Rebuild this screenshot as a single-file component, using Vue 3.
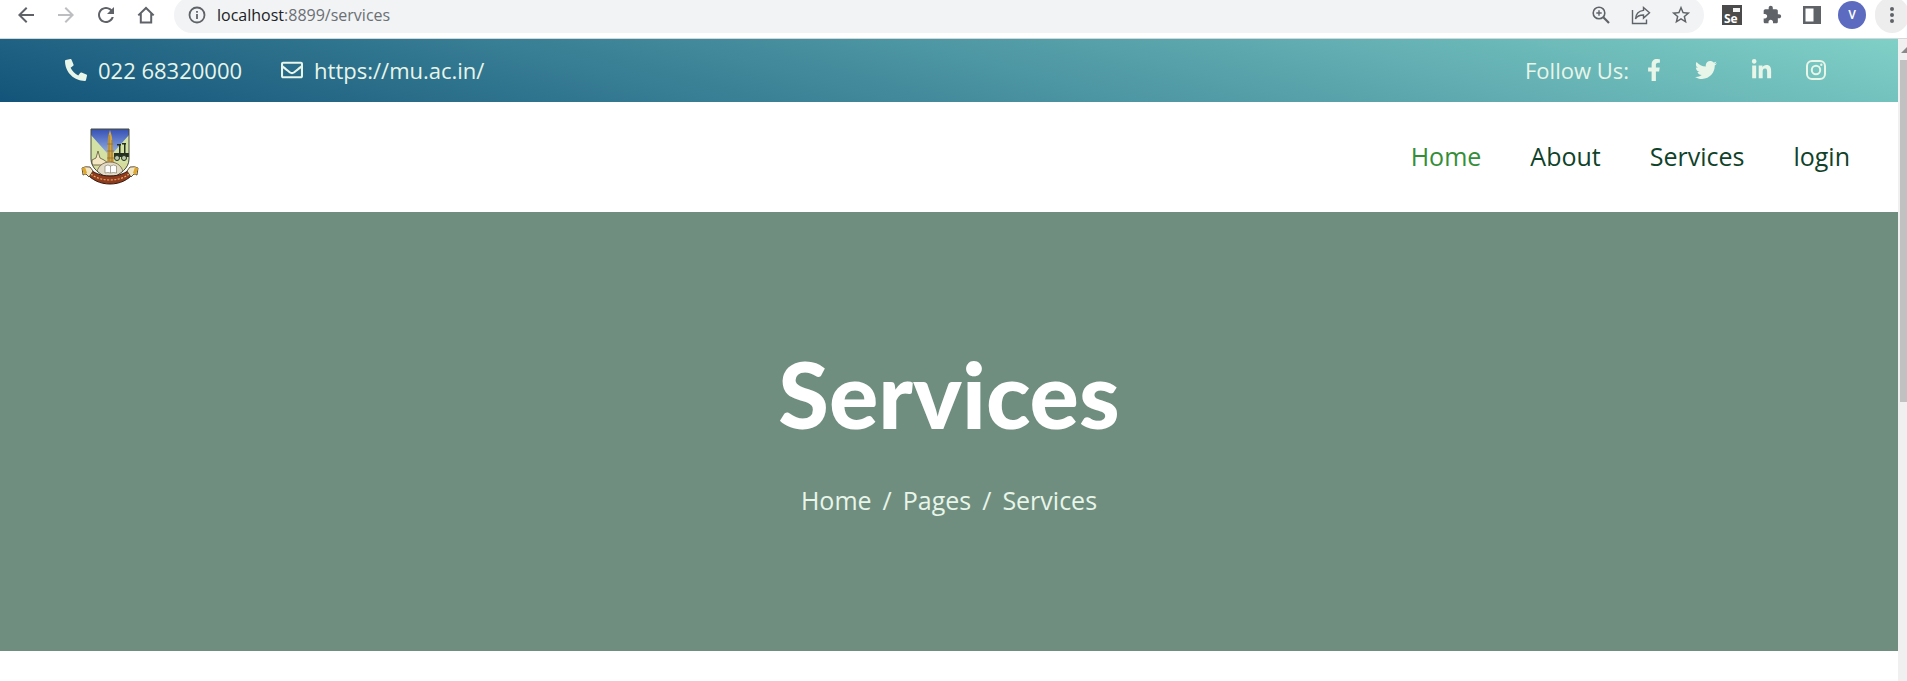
<script setup>
const navLinks = [
  { label: 'Home', active: true },
  { label: 'About', active: false },
  { label: 'Services', active: false },
  { label: 'login', active: false },
]
const crumbs = ['Home', 'Pages', 'Services']
const socials = [
  {
    name: 'Facebook',
    cls: 'facebook',
    box: '0 0 320 512',
    d: 'M279.14 288l14.22-92.66h-88.91v-60.13c0-25.35 12.42-50.06 52.24-50.06h40.42V6.26S260.43 0 225.36 0c-73.22 0-121.08 44.38-121.08 124.72v70.62H22.89V288h81.39v224h100.17V288z',
  },
  {
    name: 'Twitter',
    cls: 'twitter',
    box: '0 0 512 512',
    d: 'M459.37 151.716c.325 4.548.325 9.097.325 13.645 0 138.72-105.583 298.558-298.558 298.558-59.452 0-114.68-17.219-161.137-47.106 8.447.974 16.568 1.299 25.34 1.299 49.055 0 94.213-16.568 130.274-44.832-46.132-.975-84.792-31.188-98.112-72.772 6.498.974 12.995 1.624 19.818 1.624 9.421 0 18.843-1.3 27.614-3.573-48.081-9.747-84.143-51.98-84.143-102.985v-1.299c13.969 7.797 30.214 12.67 47.431 13.319-28.264-18.843-46.781-51.005-46.781-87.391 0-19.492 5.197-37.36 14.294-52.954 51.655 63.675 129.3 105.258 216.365 109.807-1.624-7.797-2.599-15.918-2.599-24.04 0-57.828 46.782-104.934 104.934-104.934 30.213 0 57.502 12.67 76.67 33.137 23.715-4.548 46.456-13.32 66.599-25.34-7.798 24.366-24.366 44.833-46.132 57.827 21.117-2.273 41.584-8.122 60.426-16.243-14.292 20.791-32.161 39.308-52.628 54.253z',
  },
  {
    name: 'LinkedIn',
    cls: 'linkedin',
    box: '0 0 448 512',
    d: 'M100.28 448H7.4V148.9h92.88zM53.79 108.1C24.09 108.1 0 83.5 0 53.8a53.79 53.79 0 0 1 107.58 0c0 29.7-24.1 54.3-53.79 54.3zM447.9 448h-92.68V302.4c0-34.7-.7-79.2-48.29-79.2-48.29 0-55.69 37.7-55.69 76.7V448h-92.78V148.9h89.08v40.8h1.3c12.4-23.5 42.69-48.3 87.88-48.3 94 0 111.28 61.9 111.28 142.3V448z',
  },
]
</script>

<template>
  <div class="window">
    <div class="toolbar">
      <button class="tool" aria-label="Back">
        <svg class="ic24" viewBox="0 0 24 24"><path d="M20 11H7.83l5.59-5.59L12 4l-8 8 8 8 1.41-1.41L7.83 13H20v-2z" /></svg>
      </button>
      <button class="tool dim" aria-label="Forward">
        <svg class="ic24" viewBox="0 0 24 24"><path d="M4 11h12.17l-5.59-5.59L12 4l8 8-8 8-1.41-1.41L16.17 13H4v-2z" /></svg>
      </button>
      <button class="tool" aria-label="Reload">
        <svg class="ic24" viewBox="0 0 24 24"><path d="M17.65 6.35C16.2 4.9 14.21 4 12 4c-4.42 0-7.99 3.58-7.99 8s3.57 8 7.99 8c3.73 0 6.84-2.55 7.73-6h-2.08c-.82 2.33-3.04 4-5.65 4-3.31 0-6-2.69-6-6s2.69-6 6-6c1.66 0 3.14.69 4.22 1.78L13 11h7V4l-2.35 2.35z" /></svg>
      </button>
      <button class="tool" aria-label="Home page">
        <svg class="ic24 line" viewBox="0 0 24 24"><path d="M4.3 12.4L12 5l7.700 7.400M6.800 10.500v9h10.400v-9" stroke-width="2" /></svg>
      </button>
      <div class="omnibox">
        <svg class="info line" viewBox="0 0 18 18"><circle cx="9" cy="9" r="7.500" stroke-width="1.800" /><path d="M9 8v5M9 5v1.800" stroke-width="1.800" /></svg>
        <span class="url"><b>localhost</b>:8899/services</span>
        <button class="tool" aria-label="Zoom">
          <svg class="ic20 line" viewBox="0 0 20 20"><circle cx="8" cy="8" r="5.800" stroke-width="1.600" /><path d="M12.300 12.300l5.700 5.700" stroke-width="2.200" /><path d="M8 5.300v5.400M5.300 8h5.400" stroke-width="1.400" /></svg>
        </button>
        <button class="tool" aria-label="Share">
          <svg class="ic20 line" viewBox="0 0 20 20"><path d="M1.500 5v13.500h14V14.500" stroke-width="1.400" /><path d="M12.500 2.500l6 5.300-6 5.300V10c-4 0-6.500 1-8 4 .3-5 3-8 8-8.600z" stroke-width="1.400" /></svg>
        </button>
        <button class="tool" aria-label="Bookmark">
          <svg class="ic22" viewBox="0 0 24 24"><path d="M22 9.240l-7.190-.62L12 2 9.190 8.630 2 9.240l5.460 4.730L5.820 21 12 17.270 18.180 21l-1.630-7.030L22 9.240zM12 15.400l-3.760 2.270 1-4.280-3.320-2.880 4.380-.38L12 6.100l1.710 4.040 4.380.38-3.320 2.880 1 4.280L12 15.400z" /></svg>
        </button>
      </div>
      <div class="extensions">
        <button class="tool" aria-label="Selenium">
          <span class="selenium">Se</span>
        </button>
        <button class="tool" aria-label="Extensions">
          <svg class="ic20" viewBox="0 0 24 24"><path d="M20.5 11H19V7c0-1.100-.9-2-2-2h-4V3.500C13 2.120 11.880 1 10.500 1S8 2.120 8 3.500V5H4c-1.100 0-1.990.9-1.990 2v3.800H3.500c1.490 0 2.700 1.210 2.700 2.700s-1.210 2.700-2.700 2.700H2V20c0 1.100.9 2 2 2h3.800v-1.500c0-1.490 1.210-2.700 2.700-2.700 1.490 0 2.700 1.210 2.700 2.700V22H17c1.100 0 2-.9 2-2v-4h1.500c1.380 0 2.500-1.120 2.500-2.500S21.880 11 20.500 11z" /></svg>
        </button>
        <button class="tool" aria-label="Side panel">
          <svg class="ic18" viewBox="0 0 18 18"><path d="M0 0h18v18H0zM2.500 2.500v13h8v-13z" fill-rule="evenodd" /></svg>
        </button>
        <button class="tool" aria-label="Profile"><span class="avatar">V</span></button>
        <button class="tool" aria-label="Menu">
          <span class="menu">
            <svg class="ic18" viewBox="0 0 18 18"><circle cx="9" cy="3" r="2" /><circle cx="9" cy="9" r="2" /><circle cx="9" cy="15" r="2" /></svg>
          </span>
        </button>
      </div>
    </div>

    <div class="viewport">
      <div class="page">
        <header class="topbar">
          <div class="contacts">
            <span class="contact">
              <svg class="ic22" viewBox="0 0 512 512"><path d="M497.39 361.8l-112-48a24 24 0 0 0-28 6.9l-49.6 60.6A370.66 370.66 0 0 1 130.6 204.11l60.6-49.6a23.94 23.94 0 0 0 6.9-28l-48-112A24.16 24.16 0 0 0 122.6.61l-104 24A24 24 0 0 0 0 48c0 256.500 207.900 464 464 464a24 24 0 0 0 23.400-18.600l24-104a24.290 24.290 0 0 0-14.010-27.600z" /></svg>
              022 68320000
            </span>
            <span class="contact">
              <svg class="ic22" viewBox="0 0 512 512"><path d="M464 64H48C21.490 64 0 85.490 0 112v288c0 26.510 21.490 48 48 48h416c26.510 0 48-21.490 48-48V112c0-26.510-21.490-48-48-48zm0 48v40.805c-22.422 18.259-58.168 46.651-134.587 106.490-16.841 13.247-50.201 45.072-73.413 44.701-23.208.375-56.579-31.459-73.413-44.701C106.180 199.465 70.425 171.067 48 152.805V112h416zM48 400V214.398c22.914 18.251 55.409 43.862 104.938 82.646 21.857 17.205 60.134 55.186 103.062 54.955 42.717.231 80.509-37.199 103.053-54.947 49.528-38.783 82.032-64.401 104.947-82.653V400H48z" /></svg>
              https://mu.ac.in/
            </span>
          </div>
          <div class="follow">
            <span>Follow Us:</span>
            <a v-for="s in socials" :key="s.name" href="#" :aria-label="s.name">
              <svg :class="s.cls" :viewBox="s.box"><path :d="s.d" /></svg>
            </a>
            <a href="#" aria-label="Instagram">
              <svg class="instagram line" viewBox="0 0 20 20"><rect x="1" y="1" width="18" height="18" rx="5" stroke-width="2" /><circle cx="10" cy="10" r="4.200" stroke-width="2" /><circle cx="15.300" cy="4.700" r=".6" stroke-width="1.200" /></svg>
            </a>
          </div>
        </header>

        <nav class="navbar">
          <a href="#" class="brand" aria-label="University of Mumbai">
            <svg class="crest" viewBox="0 0 60 60">
              <defs>
                <linearGradient id="sky" x1="0" y1="0" x2="0" y2="1">
                  <stop offset="0" stop-color="#3550b4" />
                  <stop offset=".6" stop-color="#a9c6ee" />
                  <stop offset="1" stop-color="#e2eddc" />
                </linearGradient>
                <clipPath id="shield"><path d="M11 2h38v30c0 9-8 15-19 20C19 47 11 41 11 32z" /></clipPath>
              </defs>
              <g clip-path="url(#shield)">
                <path d="M11 2h38v50H11z" fill="url(#sky)" />
                <path d="M11 8l16 18v14H11zM49 8L33 26v14h16z" fill="#d3e2a4" />
                <path d="M11 36h38v16H11z" fill="#d6dc9c" />
                <path d="M27 36l1-26 2-7 2 7 2 26z" fill="#d0a548" />
                <path d="M29 8v26M32 13v22M27 17h6M27 24h7M27 31h7" stroke="#8d6a2c" stroke-width=".7" />
                <path d="M12 33l4-2 2-7 2 7 4 2 4 3-1 2H12z" fill="#f3e7c4" stroke="#5d523a" stroke-width=".8" />
                <path d="M34 26h15v4H34zM39 18h1.500v9H39zM44 17h1.500v9H44zM37 17h4v1.500h-4zM42 16h4v1.500h-4z" fill="#263020" />
                <circle cx="37" cy="31" r="2.500" fill="#bdc8ae" stroke="#263020" /><circle cx="44" cy="31" r="2.500" fill="#bdc8ae" stroke="#263020" />
                <path d="M16 49c1-10 7-14 14-14s13 4 14 14z" fill="#e2dac4" stroke="#6c5b3c" stroke-width=".8" />
                <path d="M25 39q3-2 5.500 0 3-2 6 0v7q-3-1-6 0-2.500-1-5.500 0zM30.500 39v7" fill="#fff" stroke="#77705c" stroke-width=".6" />
              </g>
              <path d="M11 2h38v30c0 9-8 15-19 20C19 47 11 41 11 32z" fill="none" stroke="#464b35" />
              <path d="M8 41c6 5 13 8 22 8s16-3 22-8l2 5c-6 7-14 11-24 11S12 53 6 46z" fill="#8f3b1c" stroke="#33190f" />
              <path d="M11 47c9 8 29 8 38 0" fill="none" stroke="#e7ad67" stroke-width="1.200" stroke-dasharray="2 1.500" />
              <path d="M2 41q3-2 8-1l3 4-4 6-3-3-3 1z" fill="#f2e6c2" stroke="#3d2b15" stroke-width=".8" />
              <path d="M58 41q-3-2-8-1l-3 4 4 6 3-3 3 1z" fill="#f2e6c2" stroke="#3d2b15" stroke-width=".8" />
              <path d="M2 41l3-1 2 6-3 2zM58 41l-3-1-2 6 3 2z" fill="#dfa72c" />
            </svg>
          </a>
          <div class="links">
            <a v-for="l in navLinks" :key="l.label" href="#" :class="{ active: l.active }">{{ l.label }}</a>
          </div>
        </nav>

        <main class="hero">
          <h1>Services</h1>
          <ol class="crumbs">
            <li v-for="(c, i) in crumbs" :key="c"><span v-if="i" class="slash">/</span><a href="#">{{ c }}</a></li>
          </ol>
        </main>
      </div>

      <div class="scrollbar">
        <div class="up"><svg viewBox="0 0 7 6"><path d="M7 0v6H1z" /></svg></div>
        <div class="track"><div class="thumb"></div></div>
      </div>
    </div>
  </div>
</template>

<style>
body {
  margin: 0;
}
</style>

<style scoped>
.window {
  display: flex;
  flex-direction: column;
  min-height: 100vh;
  overflow: hidden;
  background: #fff;
  font-family: 'Open Sans', 'Noto Sans', sans-serif;
}
svg {
  display: block;
  flex: none;
  fill: currentColor;
}
.line {
  fill: none;
  stroke: currentColor;
}
a {
  color: inherit;
  text-decoration: none;
}
.toolbar {
  display: flex;
  align-items: center;
  box-sizing: border-box;
  height: 39px;
  padding: 0 0 8px 6px;
  border-bottom: 1px solid #d5d7da;
  overflow: hidden;
  color: #5f6368;
}
.tool {
  display: flex;
  flex: none;
  align-items: center;
  justify-content: center;
  width: 40px;
  height: 36px;
  padding: 0;
  border: 0;
  background: none;
  color: inherit;
  font-family: inherit;
}
.dim {
  color: #bcbec1;
}
.ic24 {
  width: 24px;
  height: 24px;
}
.ic22 {
  width: 22px;
  height: 22px;
}
.ic20 {
  width: 20px;
  height: 20px;
}
.ic18 {
  width: 18px;
  height: 18px;
}
.omnibox {
  display: flex;
  flex: 1;
  align-items: center;
  height: 36px;
  margin-left: 8px;
  padding: 0 3px 0 14px;
  border-radius: 18px;
  background: #f1f3f4;
}
.info {
  width: 18px;
  height: 18px;
}
.url {
  flex: 1;
  margin-left: 11px;
  font-size: 16px;
  color: #6b6f74;
}
.url b {
  font-weight: 400;
  color: #202124;
}
.extensions {
  display: flex;
  margin: 0 -5px 0 8px;
}
.selenium {
  display: flex;
  align-items: flex-end;
  box-sizing: border-box;
  width: 20px;
  height: 20px;
  padding-left: 2px;
  background: linear-gradient(#f4f4f4, #f4f4f4) 11px 3px / 7px 4px no-repeat #4b4b4b;
  color: #fff;
  font-size: 12px;
  font-weight: 700;
  line-height: 13px;
}
.avatar {
  width: 28px;
  height: 28px;
  border-radius: 50%;
  background: #5c6bc0;
  color: #fff;
  font: 500 12px/28px Roboto, sans-serif;
  text-align: center;
}
.menu {
  display: flex;
  align-items: center;
  justify-content: center;
  width: 34px;
  height: 36px;
  border-radius: 18px;
  background: #ededee;
}
.viewport {
  display: flex;
  flex: 1;
}
.page {
  flex: 1;
}
.topbar {
  display: flex;
  align-items: center;
  justify-content: space-between;
  height: 61px;
  padding: 0 72px 2px 65px;
  background: linear-gradient(15deg, #13547a 0%, #80d0c7 100%);
  color: #e8f5e9;
  font-size: 22px;
}
.contacts {
  display: flex;
  gap: 39px;
}
.contact {
  display: flex;
  align-items: center;
  gap: 11px;
}
.follow {
  display: flex;
  align-items: center;
}
.follow a {
  margin-left: 34px;
}
.follow span + a {
  margin-left: 18px;
}
.facebook {
  width: 14px;
  height: 22px;
}
.twitter {
  width: 22px;
  height: 22px;
}
.linkedin {
  width: 21px;
  height: 22px;
}
.instagram {
  width: 20px;
  height: 20px;
}
.navbar {
  display: flex;
  align-items: center;
  justify-content: space-between;
  height: 110px;
  padding: 0 48px 0 80px;
}
.crest {
  width: 60px;
  height: 60px;
}
.links {
  display: flex;
  gap: 49px;
  padding-bottom: 2px;
  color: #0f4229;
  font-size: 25px;
}
.links .active {
  color: #348e38;
}
.hero {
  display: flex;
  flex-direction: column;
  align-items: center;
  padding: 128px 0 131px;
  background: #6f8e7f;
  color: #fff;
}
.hero h1 {
  margin: 0 0 32px;
  font: 900 92px/108px Lato, 'Open Sans', sans-serif;
}
.crumbs {
  display: flex;
  margin: 0;
  padding: 0;
  list-style: none;
  color: #e8f5e9;
  font-size: 25px;
  line-height: 40px;
}
.slash {
  margin: 0 11px;
}
.scrollbar {
  display: flex;
  flex-direction: column;
  width: 9px;
  background: #f0f0f0;
}
.up {
  display: flex;
  justify-content: flex-end;
  align-items: center;
  height: 21px;
  color: #8a8a8a;
}
.up svg {
  width: 7px;
  height: 6px;
}
.track {
  flex: 1;
  padding-left: 2px;
}
.thumb {
  height: 55%;
  background: #c1c1c1;
}
</style>
